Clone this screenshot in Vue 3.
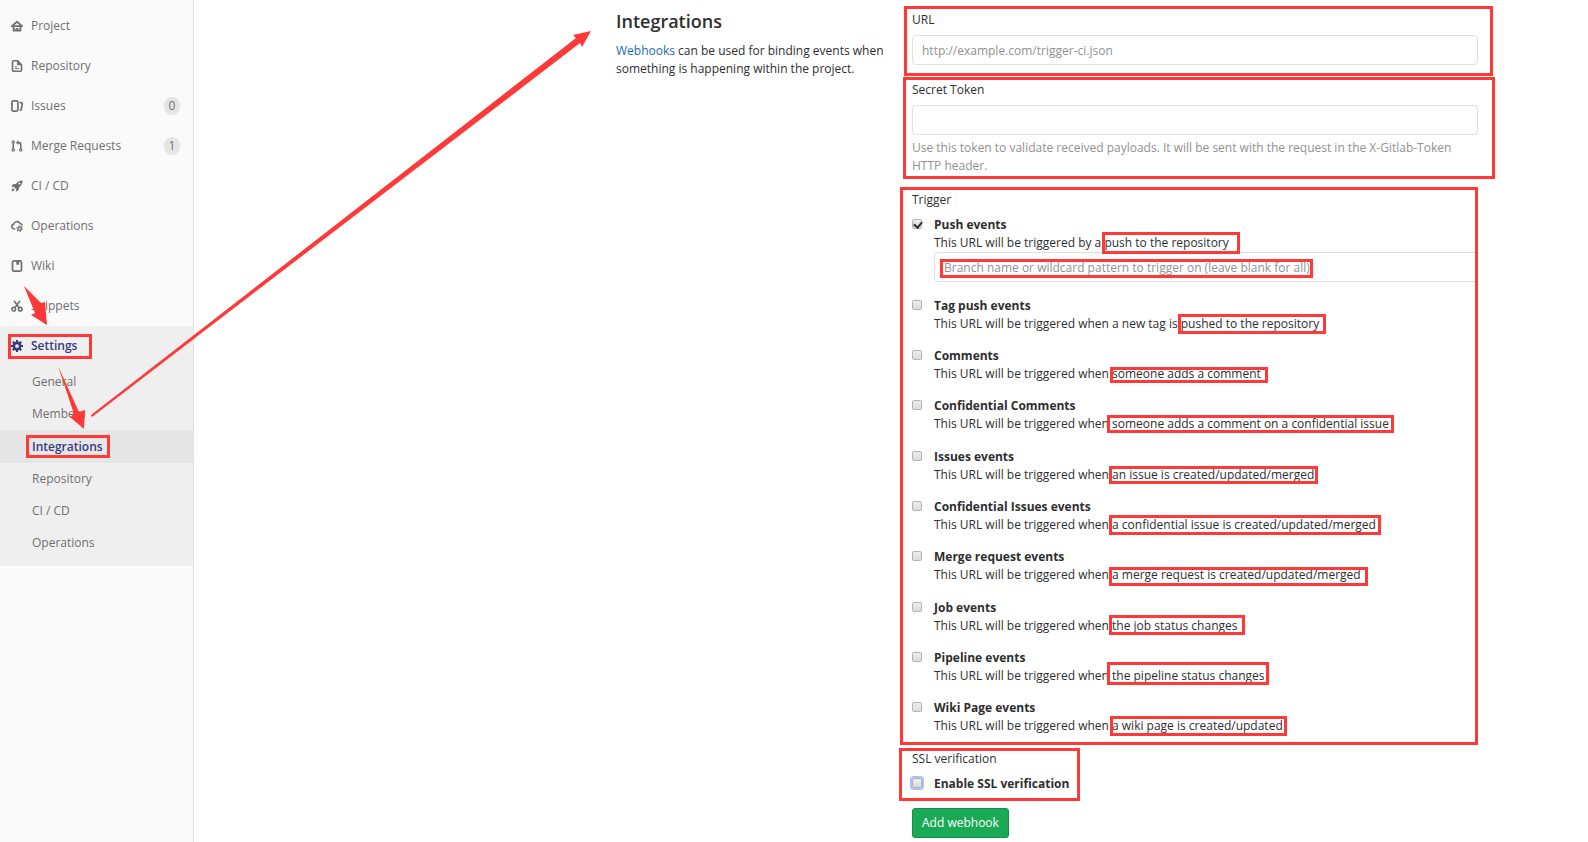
<script setup>
import { ref } from 'vue'

const nav = [
  { name: 'Project', icon: 'home' },
  { name: 'Repository', icon: 'doc' },
  { name: 'Issues', icon: 'issues', count: 0 },
  { name: 'Merge Requests', icon: 'merge', count: 1 },
  { name: 'CI / CD', icon: 'rocket' },
  { name: 'Operations', icon: 'cloud' },
  { name: 'Wiki', icon: 'book' },
  { name: 'Snippets', icon: 'scissors' },
]
const subnav = ['General', 'Members', 'Integrations', 'Repository', 'CI / CD', 'Operations']

const triggers = ref([
  { id: 'push', title: 'Push events', text: 'This URL will be triggered by a push to the repository', on: true },
  { id: 'tag', title: 'Tag push events', text: 'This URL will be triggered when a new tag is pushed to the repository', on: false },
  { id: 'note', title: 'Comments', text: 'This URL will be triggered when someone adds a comment', on: false },
  { id: 'cnote', title: 'Confidential Comments', text: 'This URL will be triggered when someone adds a comment on a confidential issue', on: false },
  { id: 'issue', title: 'Issues events', text: 'This URL will be triggered when an issue is created/updated/merged', on: false },
  { id: 'cissue', title: 'Confidential Issues events', text: 'This URL will be triggered when a confidential issue is created/updated/merged', on: false },
  { id: 'merge', title: 'Merge request events', text: 'This URL will be triggered when a merge request is created/updated/merged', on: false },
  { id: 'job', title: 'Job events', text: 'This URL will be triggered when the job status changes', on: false },
  { id: 'pipeline', title: 'Pipeline events', text: 'This URL will be triggered when the pipeline status changes', on: false },
  { id: 'wiki', title: 'Wiki Page events', text: 'This URL will be triggered when a wiki page is created/updated', on: false },
])
const ssl = ref(false)

// Outer edges of each annotation frame: left, top, right, bottom
const frames = [
  [904, 6, 1493, 76],
  [903, 77, 1495, 179],
  [900, 187, 1478, 745],
  [1102, 232, 1240, 254],
  [940, 259, 1313, 278],
  [1178, 314, 1326, 334],
  [1110, 367, 1268, 383],
  [1107, 415, 1394, 433],
  [1109, 466, 1318, 484],
  [1109, 515, 1381, 535],
  [1109, 567, 1368, 586],
  [1109, 615, 1245, 635],
  [1107, 662, 1269, 685],
  [1110, 716, 1287, 736],
  [899, 748, 1080, 801],
  [8, 334, 92, 359],
  [26, 435, 110, 458],
]
const arrows = [
  '24,286 41,303 45,302 47,325 31,315 35,313',
  '58,366 79,412 85,410 84,429 70,417 74,414',
  '91,415 576,38 573,35 591,31 582,47 580,43 92,417',
]
</script>

<template>
  <div class="page">
    <aside class="sidebar">
      <nav aria-label="Project navigation">
        <a v-for="item in nav" :key="item.name" class="nav-item" href="#">
          <svg class="icon" viewBox="0 0 16 16" aria-hidden="true">
            <g v-if="item.icon === 'home'" fill="none" stroke="currentColor" stroke-width="2.400" stroke-linejoin="round">
              <path d="M1.200 8.200 8 2.400l6.800 5.800z" />
              <path d="M3.400 8v6h9.200V8" />
              <path d="M6.800 14v-2.600h2.400V14" stroke-width="1.600" />
            </g>
            <g v-else-if="item.icon === 'doc'">
              <path d="M9 1H4a2 2 0 0 0-2 2v10a2 2 0 0 0 2 2h8a2 2 0 0 0 2-2V6.500z" fill="none" stroke="currentColor" stroke-width="2.200" stroke-linejoin="round" />
              <path d="M8.500 1v5.500H14z" fill="currentColor" stroke="currentColor" />
              <path d="M5 9h3M5 11.500h6" stroke="currentColor" stroke-width="1.300" />
            </g>
            <g v-else-if="item.icon === 'issues'" fill="none" stroke="currentColor" stroke-width="2.300">
              <rect x="1.200" y="1.200" width="8" height="13.600" rx="2" />
              <path d="M11.500 3 14 3.800q1.200.4 1 1.600l-1.300 7q-.2 1.200-1.500 1.400l-.7.100" />
            </g>
            <g v-else-if="item.icon === 'merge'" fill="none" stroke="currentColor" stroke-width="1.600">
              <circle cx="3" cy="2.600" r="1.600" /><circle cx="3" cy="13.400" r="1.600" /><circle cx="13" cy="13.400" r="1.600" />
              <path d="M3 4.200v7.600M13 11.800V5.500q0-2-2-2H8.800" stroke-width="2.200" />
              <path d="M10 .2v6.600L6.400 3.500z" fill="currentColor" stroke="none" />
            </g>
            <g v-else-if="item.icon === 'rocket'" fill="currentColor">
              <path fill-rule="evenodd" d="M15.500.5C11 .5 8.200 2.600 6.300 5.200L2.600 5.800.4 9.300l3.200-.2 3.300 3.300-.2 3.200 3.500-2.200.6-3.700c2.600-1.900 4.700-4.700 4.700-9.200zM11.400 6a1.400 1.400 0 1 1 0-2.800 1.400 1.400 0 0 1 0 2.800z" />
              <path d="M2.600 10.800l2.500 2.500-1 .8L.8 15.200l.9-3.400z" />
            </g>
            <g v-else-if="item.icon === 'cloud'" fill="none" stroke="currentColor" stroke-width="2.200">
              <path d="M5.500 12H4.200A3.200 3.200 0 0 1 3.400 5.700 4.700 4.700 0 0 1 12 4.600a3.400 3.400 0 0 1 3 3" />
              <circle cx="11.500" cy="11.500" r="2.300" stroke-width="2" />
              <circle cx="11.500" cy="11.500" r="3.800" stroke-width="1.400" stroke-dasharray="1.700 2.280" />
            </g>
            <g v-else-if="item.icon === 'book'" fill="none" stroke="currentColor" stroke-width="2.300">
              <rect x="2" y="1.200" width="12" height="13.600" rx="2" />
              <path d="M7 1h4v6L9 5.600 7 7z" fill="currentColor" stroke="none" />
            </g>
            <g v-else fill="none" stroke="currentColor" stroke-width="2.100">
              <circle cx="3.600" cy="12.200" r="2.400" /><circle cx="12.400" cy="12.200" r="2.400" />
              <path d="M4 1l6.800 9.400M12 1 5.200 10.400" />
            </g>
          </svg>
          <span class="nav-name">{{ item.name }}</span>
          <span v-if="item.count !== undefined" class="badge">{{ item.count }}</span>
        </a>
        <div class="nav-group">
          <a class="nav-item current" href="#">
            <svg class="icon" viewBox="0 0 16 16" aria-hidden="true">
              <circle cx="8" cy="8" r="4.200" fill="none" stroke="currentColor" stroke-width="3.400" />
              <path d="M8 0v3.500M8 12.500V16M0 8h3.500M12.500 8H16M2.300 2.300l2.500 2.500M11.200 11.200l2.500 2.500M2.300 13.700l2.500-2.500M11.200 4.800l2.500-2.500" stroke="currentColor" stroke-width="2.800" />
            </svg>
            <span class="nav-name">Settings</span>
          </a>
          <a v-for="name in subnav" :key="name" class="sub-item" :class="{ active: name === 'Integrations' }" href="#">{{ name }}</a>
        </div>
      </nav>
    </aside>

    <main class="content">
      <section class="intro">
        <h1>Integrations</h1>
        <p><a href="#">Webhooks</a> can be used for binding events when something is happening within the project.</p>
      </section>

      <form class="form" @submit.prevent>
        <div class="field">
          <label for="url">URL</label>
          <input id="url" class="text" type="text" placeholder="http://example.com/trigger-ci.json">
        </div>
        <div class="field">
          <label for="token">Secret Token</label>
          <input id="token" class="text" type="text">
          <p class="help">Use this token to validate received payloads. It will be sent with the request in the X-Gitlab-Token HTTP header.</p>
        </div>
        <fieldset class="group">
          <legend>Trigger</legend>
          <div v-for="t in triggers" :key="t.id" class="trigger">
            <input :id="t.id" v-model="t.on" class="check" type="checkbox">
            <div class="trigger-body">
              <label :for="t.id" class="strong">{{ t.title }}</label>
              <p>{{ t.text }}</p>
              <input v-if="t.id === 'push'" class="text" type="text" aria-label="Branch filter" placeholder="Branch name or wildcard pattern to trigger on (leave blank for all)">
            </div>
          </div>
        </fieldset>
        <fieldset class="group">
          <legend>SSL verification</legend>
          <div class="trigger">
            <input id="ssl" v-model="ssl" class="check ring" type="checkbox">
            <label for="ssl" class="strong">Enable SSL verification</label>
          </div>
        </fieldset>
        <button class="submit" type="submit">Add webhook</button>
      </form>
    </main>

    <svg class="marks" aria-hidden="true">
      <rect v-for="(f, i) in frames" :key="i" :x="f[0] + 1.5" :y="f[1] + 1.5" :width="f[2] - f[0] - 3" :height="f[3] - f[1] - 3" />
      <polygon v-for="a in arrows" :key="a" :points="a" />
    </svg>
  </div>
</template>

<style>
body {
  margin: 0;
  background: #fff;
}
</style>

<style scoped>
.page {
  position: relative;
  display: grid;
  grid-template-columns: 194px minmax(0, 1fr);
  min-height: 100vh;
  overflow: hidden;
  color: #2e2e2e;
  font-family: "Open Sans", "Noto Sans", sans-serif;
  font-size: 12px;
  line-height: 18px;
}
.page *, .page { box-sizing: border-box; }
p, h1 { margin: 0; }
a { text-decoration: none; }

.sidebar {
  padding-top: 6px;
  background: #fafafa;
  border-right: 1px solid #e1e1e1;
}
.nav-item {
  display: flex;
  align-items: center;
  height: 40px;
  padding: 0 13px 0 11px;
  color: #707070;
}
.icon {
  width: 12px;
  height: 12px;
  margin-right: 8px;
}
.nav-name { flex: 1; }
.badge {
  width: 16px;
  border-radius: 10px;
  background: #e5e5e5;
  text-align: center;
}
.nav-group {
  padding-bottom: 7px;
  background: #efefef;
}
.current {
  color: #393982;
  font-weight: 600;
}
.sub-item {
  display: block;
  padding-left: 32px;
  color: #707070;
  line-height: 32px;
}
.sub-item.active {
  background: #e6e6e6;
  color: #393982;
  font-weight: 600;
  line-height: 33px;
}

.content {
  display: grid;
  grid-template-columns: minmax(0, 1fr) minmax(0, 2fr);
  column-gap: 13px;
  align-items: start;
  padding: 11px 110px 0 422px;
}
h1 {
  margin-bottom: 11px;
  font-size: 18px;
  font-weight: 600;
  line-height: 20px;
}
.intro a { color: #1b69b6; }

.field { margin-bottom: 16px; }
.field label {
  display: block;
  margin-bottom: 6px;
}
.text {
  display: block;
  width: 100%;
  height: 30px;
  padding: 0 9px;
  border: 1px solid #dfdfdf;
  border-radius: 4px;
  background: #fff;
  color: #2e2e2e;
  font: inherit;
}
.text::placeholder {
  color: #919191;
  opacity: 1;
}
.help {
  margin-top: 4px;
  color: #919191;
}
.group {
  min-width: 0;
  margin: 0;
  padding: 0;
  border: 0;
}
legend {
  margin-bottom: 7px;
  padding: 0;
}
.trigger {
  display: flex;
  align-items: flex-start;
  gap: 12px;
  margin-bottom: 14px;
}
.trigger:nth-of-type(3n + 1) { margin-bottom: 15px; }
.trigger-body {
  flex: 1;
  min-width: 0;
}
.strong {
  display: block;
  font-weight: 700;
}
.check {
  position: relative;
  flex: none;
  width: 10px;
  height: 10px;
  margin: 3px 0 0;
  border: 1px solid #b4b4b4;
  border-radius: 2px;
  background: linear-gradient(#ededed, #dcdcdc);
  appearance: none;
}
.check:checked::after {
  content: "";
  position: absolute;
  top: 0;
  left: 2px;
  width: 4px;
  height: 6px;
  border: solid #333;
  border-width: 0 2px 2px 0;
  transform: rotate(40deg);
}
.ring { box-shadow: 0 0 0 2px #a5c3f8; }
.submit {
  display: block;
  height: 30px;
  padding: 0 9px;
  border: 1px solid #168f48;
  border-radius: 3px;
  background: #1aaa55;
  color: #fff;
  font: inherit;
}
.marks {
  position: absolute;
  top: 0;
  left: 0;
  width: 100%;
  height: 100%;
  pointer-events: none;
}
.marks rect {
  fill: none;
  stroke: #ff3838;
  stroke-width: 3px;
}
.marks polygon { fill: #ff3838; }
</style>
